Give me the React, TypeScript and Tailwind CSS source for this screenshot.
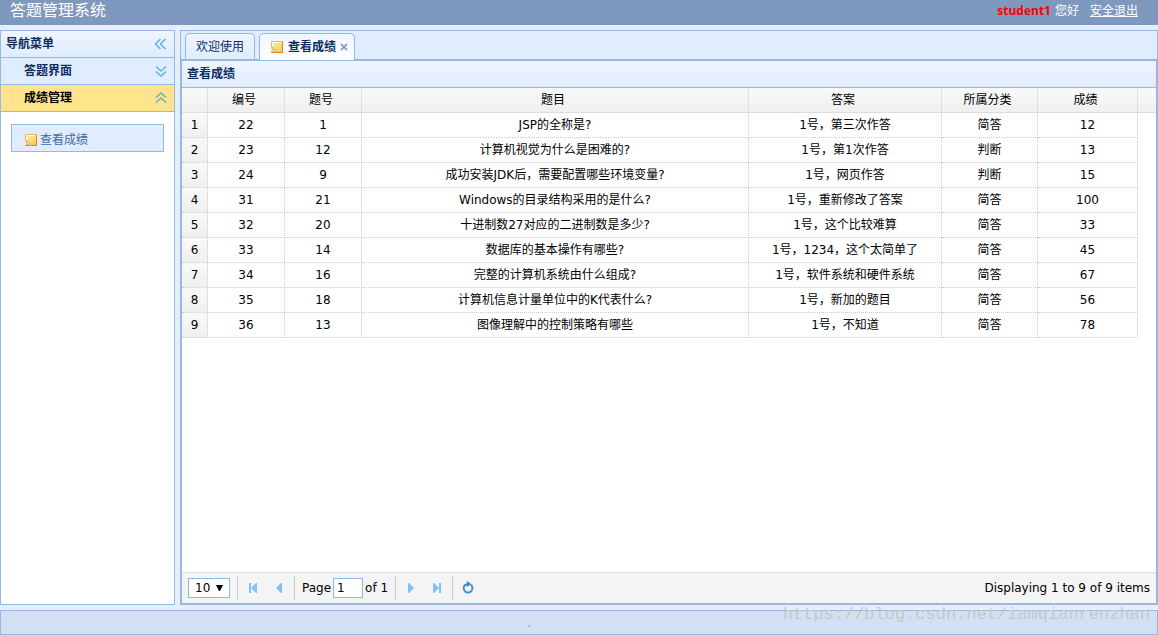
import type React from "react";

interface Score {
    id: number;
    questionNo: number;
    title: string;
    answer: string;
    category: string;
    score: number;
}

const scores: Score[] = [
    { id: 22, questionNo: 1, title: "JSP的全称是?", answer: "1号，第三次作答", category: "简答", score: 12 },
    { id: 23, questionNo: 12, title: "计算机视觉为什么是困难的?", answer: "1号，第1次作答", category: "判断", score: 13 },
    { id: 24, questionNo: 9, title: "成功安装JDK后，需要配置哪些环境变量?", answer: "1号，网页作答", category: "判断", score: 15 },
    { id: 31, questionNo: 21, title: "Windows的目录结构采用的是什么?", answer: "1号，重新修改了答案", category: "简答", score: 100 },
    { id: 32, questionNo: 20, title: "十进制数27对应的二进制数是多少?", answer: "1号，这个比较难算", category: "简答", score: 33 },
    { id: 33, questionNo: 14, title: "数据库的基本操作有哪些?", answer: "1号，1234，这个太简单了", category: "简答", score: 45 },
    { id: 34, questionNo: 16, title: "完整的计算机系统由什么组成?", answer: "1号，软件系统和硬件系统", category: "简答", score: 67 },
    { id: 35, questionNo: 18, title: "计算机信息计量单位中的K代表什么?", answer: "1号，新加的题目", category: "简答", score: 56 },
    { id: 36, questionNo: 13, title: "图像理解中的控制策略有哪些", answer: "1号，不知道", category: "简答", score: 78 },
];

const NoteIcon: React.FC = () => (
    <svg width="16" height="16" viewBox="0 0 16 16" className="shrink-0" aria-hidden="true">
        <defs>
            <linearGradient id="note" x1="0" y1="0" x2="1" y2="1">
                <stop offset="0" stopColor="#fff6b8" />
                <stop offset="1" stopColor="#f5c342" />
            </linearGradient>
        </defs>
        <path d="M1.5 2.5h11v11h-11z" fill="url(#note)" stroke="#eeb75c" />
        <path d="M12.5 2.5v11h-8" fill="none" stroke="#e0822c" />
        <path d="M2.5 8v-4.5h9" fill="none" stroke="#fffbe0" />
        <path d="M1 8h2l4 4v2h-6z" fill="#fbe3b0" />
        <path d="M1.5 8.5h1.5l3.5 3.5v1.5" fill="none" stroke="#e9a04a" />
        <path d="M2 10.5h1.5M3 12.5h1.5M1 13.5h5" stroke="#e08a2e" />
    </svg>
);

const DoubleChevron: React.FC<{ direction: "left" | "up" | "down" }> = ({ direction }) => {
    const paths = {
        left: "M7.5 3l-5 5l5 5M12.5 3l-5 5l5 5",
        up: "M3 7.5l5-4.5l5 4.5M3 12.5l5-4.5l5 4.5",
        down: "M3 3.5l5 4.5l5-4.5M3 8.5l5 4.5l5-4.5",
    };
    return (
        <svg
            width="16"
            height="16"
            viewBox="0 0 16 16"
            fill="none"
            stroke={direction === "up" ? "#6aafb5" : "#5eb0ea"}
            strokeWidth="1.5"
            aria-hidden="true"
        >
            <path d={paths[direction]} />
        </svg>
    );
};

const PagerButton: React.FC<{ label: string; children: React.ReactNode }> = ({ label, children }) => (
    <button title={label} aria-label={label} className="flex size-[26px] items-center justify-center cursor-pointer">
        <svg width="16" height="16" viewBox="0 0 16 16" fill="#84c1f0" aria-hidden="true">
            {children}
        </svg>
    </button>
);

const Separator: React.FC = () => <div className="mx-[2px] h-6 w-px bg-[#ccc]" />;

const Sidebar: React.FC = () => (
    <aside className="flex w-[175px] shrink-0 flex-col border border-[#95b8e7] bg-white font-bold text-[#0e2d5f]">
        <div className="flex h-[27px] items-center justify-between border-b border-[#95b8e7] bg-linear-to-b from-[#eff5ff] to-[#e0ecff] pr-[5px] pl-[5px]">
            <h2>导航菜单</h2>
            <button aria-label="收起" className="cursor-pointer">
                <DoubleChevron direction="left" />
            </button>
        </div>
        <button className="flex h-[27px] items-center justify-between border-b border-[#95b8e7] bg-[#e0ecff] pr-[5px] pl-[23px] cursor-pointer">
            答题界面
            <DoubleChevron direction="down" />
        </button>
        <button className="flex h-[27px] items-center justify-between border-b border-[#95b8e7] bg-[#ffe48d] pr-[5px] pl-[23px] text-black cursor-pointer">
            成绩管理
            <DoubleChevron direction="up" />
        </button>
        <nav className="px-[10px] py-3">
            <a
                href="#scores"
                className="flex h-7 items-center border border-[#95b8e7] bg-[#e0ecff] pt-[3px] pl-3 font-normal text-[#416aa3]"
            >
                <NoteIcon />
                查看成绩
            </a>
        </nav>
    </aside>
);

const Tabs: React.FC = () => (
    <div className="flex h-[29px] items-end gap-1 border-b border-[#95b8e7] bg-[#e0ecff] px-1 text-[#0e2d5f]">
        <button className="h-[26px] rounded-t-[5px] border border-b-0 border-[#95b8e7] bg-linear-to-b from-[#eff5ff] to-[#e0ecff] px-[10px] cursor-pointer">
            欢迎使用
        </button>
        <div className="-mb-px flex h-[27px] items-center rounded-t-[5px] border border-b-0 border-[#95b8e7] bg-linear-to-b from-[#eff5ff] to-white pr-[6px] pl-[10px]">
            <button className="flex items-center gap-[2px] font-bold cursor-pointer">
                <NoteIcon />
                查看成绩
            </button>
            <button aria-label="关闭" className="ml-1 cursor-pointer">
                <svg width="8" height="8" viewBox="0 0 8 8" stroke="#6f92c4" strokeWidth="1.5" aria-hidden="true">
                    <path d="M1 1l6 6M7 1l-6 6" />
                </svg>
            </button>
        </div>
    </div>
);

const cell = "border-r border-b border-dotted border-[#ccc]";
const headCell = "border-r border-r-[#ccc] border-b border-b-[#ddd] [border-right-style:dotted] pr-1 font-normal";

const ScoreTable: React.FC = () => (
    <table className="w-full table-fixed border-separate border-spacing-0 text-center">
        <colgroup>
            <col className="w-[26px]" />
            <col className="w-[77px]" />
            <col className="w-[77px]" />
            <col />
            <col className="w-[193px]" />
            <col className="w-[96px]" />
            <col className="w-[100px]" />
            <col className="w-[18px]" />
        </colgroup>
        <thead>
            <tr className="h-[25px] bg-linear-to-b from-[#f9f9f9] to-[#efefef]">
                <td className={headCell} />
                {["编号", "题号", "题目", "答案", "所属分类", "成绩"].map((heading) => (
                    <th key={heading} className={headCell}>
                        {heading}
                    </th>
                ))}
                <td className="border-b border-[#ddd]" />
            </tr>
        </thead>
        <tbody>
            {scores.map((row, index) => (
                <tr key={row.id} className="h-[25px]">
                    <td className={`${cell} bg-linear-to-b from-[#f9f9f9] to-[#efefef]`}>{index + 1}</td>
                    <td className={cell}>{row.id}</td>
                    <td className={cell}>{row.questionNo}</td>
                    <td className={cell}>{row.title}</td>
                    <td className={cell}>{row.answer}</td>
                    <td className={cell}>{row.category}</td>
                    <td className={cell}>{row.score}</td>
                    <td />
                </tr>
            ))}
        </tbody>
    </table>
);

const Pager: React.FC = () => (
    <div className="flex h-[31px] items-center border-t border-[#ddd] bg-[#f4f4f4] px-[6px]">
        <div className="relative mr-[5px]">
            <select
                aria-label="每页条数"
                defaultValue="10"
                className="block h-5 w-[42px] appearance-none border border-[#95b8e7] bg-white pl-[6px]"
            >
                <option>10</option>
                <option>20</option>
                <option>50</option>
            </select>
            <svg
                width="7"
                height="7"
                viewBox="0 0 7 7"
                className="pointer-events-none absolute top-[7px] right-[7px]"
                aria-hidden="true"
            >
                <path d="M0 0h7l-3 6h-1z" />
            </svg>
        </div>
        <Separator />
        <PagerButton label="首页">
            <path d="M4 3h2v10H4zM12 3v10h-1L6 8l5-5z" />
        </PagerButton>
        <PagerButton label="上一页">
            <path d="M11 3v10h-1L5 8l5-5z" />
        </PagerButton>
        <Separator />
        <label className="ml-[5px] flex items-center gap-[2px]">
            Page
            <input
                type="text"
                defaultValue="1"
                className="h-5 w-[30px] border border-[#95b8e7] bg-white px-[3px] outline-none"
            />
        </label>
        <span className="mr-[5px] ml-[2px]">of 1</span>
        <Separator />
        <PagerButton label="下一页">
            <path d="M5 3v10h1l5-5l-5-5z" />
        </PagerButton>
        <PagerButton label="末页">
            <path d="M4 3v10h1l5-5l-5-5zM10 3h2v10h-2z" />
        </PagerButton>
        <Separator />
        <PagerButton label="刷新">
            <path d="M10.5 4.5A4.4 4.4 0 1 1 5 5" fill="none" stroke="#3a94d8" strokeWidth="2" />
            <path d="M7 1l4 3l-4 3z" fill="#2a84cc" />
            <path d="M4.5 5.5l3-1.5" stroke="#3a94d8" strokeWidth="2" />
        </PagerButton>
        <div className="ml-auto">Displaying 1 to 9 of 9 items</div>
    </div>
);

const App: React.FC = () => {
    return (
        <div className="flex min-h-screen flex-col bg-[#e6eef8] font-['DejaVu_Sans','Noto_Sans_CJK_SC',sans-serif] text-[12px] leading-4 text-black">
            <header className="flex h-[25px] items-center justify-between bg-[#7f99be] pr-5 pl-[10px] pb-1 text-white">
                <h1 className="text-base leading-5">答题管理系统</h1>
                <div className="flex items-center">
                    <span className="mr-1 font-['Open_Sans',sans-serif] font-bold text-[#ff0000]">student1</span>
                    <span>您好</span>
                    <a href="#logout" className="ml-[11px] underline">
                        安全退出
                    </a>
                </div>
            </header>
            <div className="flex flex-1 gap-[5px] py-[5px]">
                <Sidebar />
                <main className="flex min-w-0 flex-1 flex-col border border-[#95b8e7]">
                    <Tabs />
                    <section className="flex flex-1 flex-col border border-[#95b8e7] bg-white">
                        <h2 className="flex h-[27px] items-center border-b border-[#95b8e7] bg-linear-to-b from-[#eff5ff] to-[#e0ecff] pl-[5px] font-bold text-[#0e2d5f]">
                            查看成绩
                        </h2>
                        <div className="flex-1">
                            <ScoreTable />
                        </div>
                        <Pager />
                    </section>
                </main>
            </div>
            <footer className="relative flex h-[25px] items-center justify-center border border-[#95b8e7] bg-[#d2e0f2] pr-[100px] text-[#5f9bd0]">
                .
                <span className="pointer-events-none absolute right-[7px] -top-[6px] font-['Liberation_Mono',monospace] text-[17px] leading-5 text-[#c2c8cf]">
                    https://blog.csdn.net/iamqianrenzhan
                </span>
            </footer>
        </div>
    );
};

export default App;
